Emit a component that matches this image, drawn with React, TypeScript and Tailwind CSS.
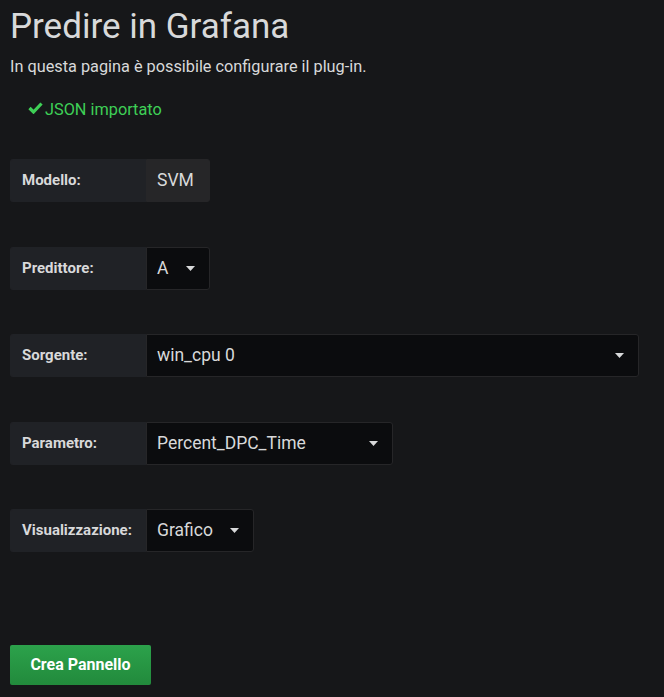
import React from "react";

const font = { fontFamily: "Roboto, 'Liberation Sans', sans-serif" };

function Caret() {
  return (
    <svg width="9" height="5" viewBox="0 0 9 5" className="shrink-0">
      <path d="M0 0 L9 0 L4.5 5 Z" fill="#d8d9da" />
    </svg>
  );
}

type RowProps = {
  label: string;
  value: string;
  width: string;
  select?: boolean;
};

function FormRow({ label, value, width, select = true }: RowProps) {
  return (
    <div className="flex h-[43px] items-stretch">
      <div className="flex w-[136px] items-center rounded-l-[3px] border border-r-0 border-[#202226] bg-[#202226] pl-[11px] text-[15px] font-bold text-[#d8d9da]">
        {label}
      </div>
      <div
        className={`flex ${width} items-center justify-between rounded-r-[3px] border pl-[10px] pr-[14px] text-[17.5px] text-[#d8d9da] ${
          select ? "border-[#262628] bg-[#0b0c0e]" : "border-[#262628] bg-[#262628]"
        }`}
      >
        <span>{value}</span>
        {select && <Caret />}
      </div>
    </div>
  );
}

export default function App() {
  return (
    <div className="min-h-[697px] w-full bg-[#161719] px-[10px] pt-[6px]" style={font}>
      {/* Heading */}
      <h1 className="text-[35px] leading-[42px] text-[#d8d9da]">Predire in Grafana</h1>
      <p className="mt-[9px] text-[16.3px] leading-[20px] text-[#d8d9da]">
        In questa pagina è possibile configurare il plug-in.
      </p>

      {/* Import status */}
      <div className="mt-[23px] flex items-center pl-[18px] text-[16.3px] leading-[20px] text-[#3ecf56]">
        <svg width="15" height="12" viewBox="0 0 15 12" className="mr-[2px] -mt-[4px]">
          <path d="M1.5 6 L5.5 10 L13.5 1.5" stroke="#3ecf56" strokeWidth="3.2" fill="none" />
        </svg>
        JSON importato
      </div>

      {/* Form rows */}
      <div className="mt-[39px] flex flex-col gap-[44.5px]">
        <FormRow label="Modello:" value="SVM" width="w-[64px]" select={false} />
        <FormRow label="Predittore:" value="A" width="w-[64px]" />
        <FormRow label="Sorgente:" value="win_cpu 0" width="w-[493px]" />
        <FormRow label="Parametro:" value="Percent_DPC_Time" width="w-[247px]" />
        <FormRow label="Visualizzazione:" value="Grafico" width="w-[108px]" />
      </div>

      <button className="mt-[93px] flex h-[40px] w-[141px] items-center justify-center rounded-[2px] bg-gradient-to-b from-[#2ca24b] to-[#228a3c] text-[16px] font-bold text-white">
        Crea Pannello
      </button>
    </div>
  );
}
